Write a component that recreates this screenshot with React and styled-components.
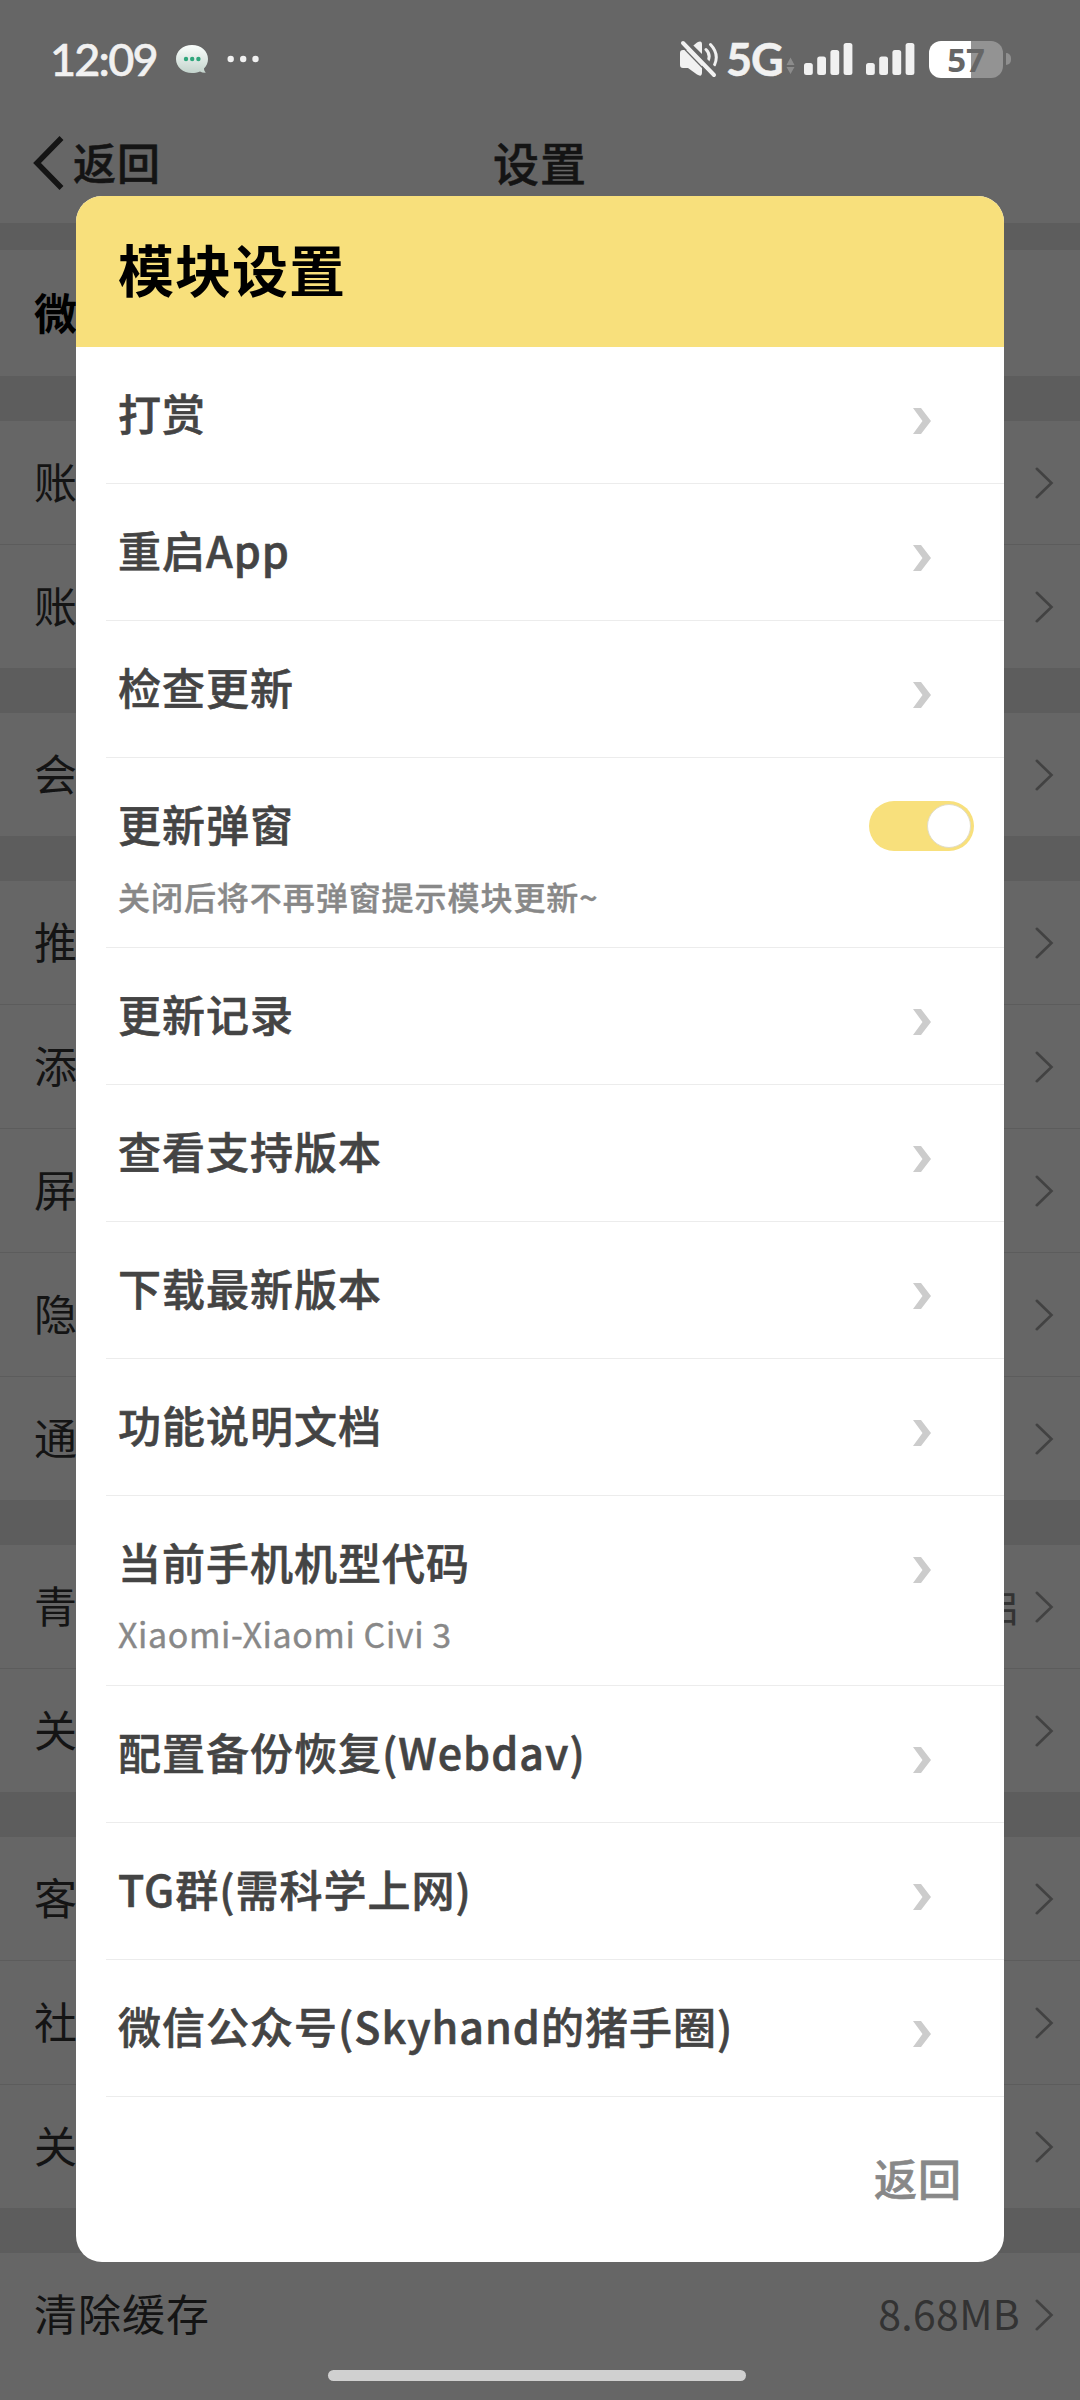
import React, { useState } from "react";
import styled, { createGlobalStyle } from "styled-components";

const GlobalStyle = createGlobalStyle`
	* {
		box-sizing: border-box;
	}

	body {
		margin: 0;
		background-color: #666;
		font-family: "Noto Sans CJK SC", "Noto Sans", sans-serif;
	}
`;

//Styled components
const Screen = styled.div`
	position: relative;
	width: 1080px;
	height: 2400px;
	overflow: hidden;
	background-color: #666;
`;

const StatusBar = styled.header`
	display: flex;
	align-items: center;
	justify-content: space-between;
	height: 100px;
	padding: 0 69px 0 50px;
	color: #f1f1f1;
`;

const StatusSide = styled.div`
	display: flex;
	align-items: center;
	height: 60px;
	margin-top: 18px;
`;

const Clock = styled.span`
	width: 107px;
	font-family: Lato, sans-serif;
	font-size: 45px;
	font-weight: 500;
	letter-spacing: -1.8px;
	line-height: 60px;
	white-space: nowrap;
	-webkit-text-stroke: 0.6px currentColor;
`;

const NavBar = styled.nav`
	display: grid;
	grid-template-columns: 1fr 1fr 1fr;
	align-items: center;
	height: 123px;
	padding: 0 32px 2px;
	color: #141414;
`;

const BackLink = styled.div`
	display: flex;
	align-items: center;
	gap: 8px;
	font-size: 43px;
	font-weight: 500;
	letter-spacing: 1px;
	line-height: 60px;
	-webkit-text-stroke: 0.5px currentColor;
`;

const BackArrow = styled.svg`
	margin-top: 4px;
`;

const NavTitle = styled.h1`
	margin: 0;
	font-size: 46px;
	font-weight: 500;
	letter-spacing: 1px;
	line-height: 60px;
	text-align: center;
	-webkit-text-stroke: 0.5px currentColor;
`;

const Group = styled.section`
	border-top: ${(props) => props.$gap || 45}px solid #5d5d5d;
`;

const PageRow = styled.div`
	display: flex;
	align-items: center;
	height: ${(props) => props.$height || 124}px;
	padding: 0 26px 0 34px;
	border-bottom: 1px solid #5c5c5c;
	color: ${(props) => (props.$strong ? "#000" : "#141414")};
	font-size: 43px;
	font-weight: ${(props) => (props.$strong ? 700 : 400)};
	letter-spacing: 1px;
	line-height: 60px;

	&:last-child {
		height: ${(props) => (props.$height || 124) - 1}px;
		border-bottom: none;
	}
`;

const RowLabel = styled.span`
	padding-bottom: 5px;
`;

const RowValue = styled.span`
	margin-left: auto;
	margin-right: 15px;
	padding-bottom: 5px;
	color: #333;
	font-size: 41px;
	letter-spacing: 0.3px;
`;

const RowArrow = styled.svg`
	margin-left: ${(props) => (props.$push ? "auto" : 0)};
`;

const Dialog = styled.div`
	position: absolute;
	top: 196px;
	left: 76px;
	width: 928px;
	height: 2066px;
	overflow: hidden;
	border-radius: 26px;
	background-color: #fff;
`;

const DialogTitle = styled.h2`
	height: 151px;
	margin: 0;
	padding-left: 42px;
	background-color: #f8e07c;
	color: #000;
	font-size: 56px;
	font-weight: 700;
	letter-spacing: 1px;
	line-height: 144px;
`;

const Item = styled.div`
	display: flex;
	align-items: flex-start;
	justify-content: space-between;
	height: ${(props) => (props.$tall ? 190 : 137)}px;
	margin-left: 30px;
	padding-left: 12px;
	border-bottom: 1px solid #ececec;
`;

const ItemTitle = styled.div`
	padding-top: 35px;
	color: #444;
	font-size: 43px;
	font-weight: 500;
	letter-spacing: 1px;
	line-height: 60px;
	white-space: nowrap;
	-webkit-text-stroke: 0.6px currentColor;
`;

const ItemNote = styled.div`
	padding-top: 23px;
	color: #888;
	font-size: ${(props) => (props.$latin ? 34 : 32)}px;
	font-weight: ${(props) => (props.$latin ? 400 : 500)};
	letter-spacing: ${(props) => (props.$latin ? 0.6 : 0.95)}px;
	line-height: 40px;
	white-space: nowrap;
	-webkit-text-stroke: 0.4px currentColor;
`;

const ItemArrow = styled.svg`
	margin: 61px 73px 0 0;
`;

const Switch = styled.button`
	display: flex;
	justify-content: ${(props) => (props.$on ? "flex-end" : "flex-start")};
	align-items: center;
	width: 105px;
	height: 50px;
	margin: 43px 30px 0 0;
	padding: 3px;
	border: none;
	border-radius: 25px;
	background-color: ${(props) => (props.$on ? "#f8e07c" : "#ddd")};
`;

const Knob = styled.span`
	width: 44px;
	height: 44px;
	border: 1px solid #e0dcc8;
	border-radius: 50%;
	background-color: #fff;
`;

const DialogFooter = styled.footer`
	display: flex;
	justify-content: flex-end;
	padding: 50px 42px 0 0;
	color: #888;
	font-size: 43px;
	font-weight: 500;
	letter-spacing: 1px;
	line-height: 60px;
	-webkit-text-stroke: 0.6px currentColor;
`;

const HomeBar = styled.div`
	position: absolute;
	bottom: 19px;
	left: 328px;
	width: 418px;
	height: 11px;
	border-radius: 6px;
	background-color: #d0d0d0;
`;

const Network = styled.span`
	width: 60px;
	margin-left: 7px;
	font-family: Lato, sans-serif;
	font-size: 45px;
	font-weight: 700;
	letter-spacing: -1px;
	line-height: 60px;
	-webkit-text-stroke: 0.5px currentColor;
`;

const Battery = styled.div`
	display: flex;
	align-items: center;
	justify-content: center;
	width: 74px;
	height: 37px;
	margin-left: 14px;
	border-radius: 12px;
	background: linear-gradient(90deg, #fff 57%, #939393 57%);
	color: #666;
	font-family: "Open Sans", sans-serif;
	font-size: 33px;
	font-weight: 700;
	line-height: 37px;
`;

const BatteryTip = styled.span`
	width: 5px;
	height: 12px;
	margin-left: 3px;
	border-radius: 0 6px 6px 0;
	background-color: #8f8f8f;
`;

const SignalIcon = styled.svg`
	margin-left: ${(props) => props.$space}px;
`;

const BubbleIcon = styled.svg`
	margin-left: 18px;
`;

const pageGroups = [
	{ gap: 27, rows: [{ label: "微", strong: true, height: 127 }] },
	{ rows: [{ label: "账" }, { label: "账" }] },
	{ rows: [{ label: "会" }] },
	{
		rows: [
			{ label: "推" },
			{ label: "添" },
			{ label: "屏" },
			{ label: "隐" },
			{ label: "通" },
		],
	},
	{ rows: [{ label: "青", value: "启" }, { label: "关" }] },
	{ rows: [{ label: "客" }, { label: "社" }, { label: "关" }] },
	{ rows: [{ label: "清除缓存", value: "8.68MB" }] },
];

const items = [
	{ title: "打赏" },
	{ title: "重启App" },
	{ title: "检查更新" },
	{ title: "更新弹窗", note: "关闭后将不再弹窗提示模块更新~", toggle: true },
	{ title: "更新记录" },
	{ title: "查看支持版本" },
	{ title: "下载最新版本" },
	{ title: "功能说明文档" },
	{ title: "当前手机机型代码", note: "Xiaomi-Xiaomi Civi 3", latin: true },
	{ title: "配置备份恢复(Webdav)" },
	{ title: "TG群(需科学上网)" },
	{ title: "微信公众号(Skyhand的猪手圈)" },
];

function Signal({ space }) {
	return (
		<SignalIcon $space={space} width="49" height="34" viewBox="0 0 49 34" fill="#f1f1f1">
			<rect x="0" y="21" width="8.8" height="12" rx="2.5" />
			<rect x="13.2" y="14.5" width="8.8" height="18.5" rx="2.5" />
			<rect x="26.4" y="8" width="8.8" height="25" rx="2.5" />
			<rect x="39.6" y="1" width="8.8" height="32" rx="2.5" />
		</SignalIcon>
	);
}

//JSX
export default function App() {
	const [popup, setPopup] = useState(true);

	return (
		<Screen>
			<GlobalStyle />
			<StatusBar>
				<StatusSide>
					<Clock>12:09</Clock>
					<BubbleIcon width="90" height="34" viewBox="0 0 90 34">
						<defs>
							<linearGradient id="bubble" x1="0" y1="0" x2="0" y2="1">
								<stop offset="0" stopColor="#fbfffd" />
								<stop offset="1" stopColor="#c3d3cc" />
							</linearGradient>
						</defs>
						<path
							d="M17 3C8 3 1 9 1 17s7 14 16 14c3 0 5-.6 8-1.600 2 1.200 4 1.500 6 1.200-1.500-1-2-2.500-2-4 2.500-2.600 4-6 4-9.600C33 9 26 3 17 3z"
							fill="url(#bubble)"
						/>
						<circle cx="11" cy="17" r="2.200" fill="#2fa67c" />
						<circle cx="17.200" cy="17" r="2.200" fill="#2fa67c" />
						<circle cx="23.400" cy="17" r="2.200" fill="#2fa67c" />
						<circle cx="55.700" cy="17" r="3.200" fill="#f1f1f1" />
						<circle cx="68.200" cy="17" r="3.200" fill="#f1f1f1" />
						<circle cx="80.500" cy="17" r="3.200" fill="#f1f1f1" />
					</BubbleIcon>
				</StatusSide>
				<StatusSide>
					<svg width="40" height="38" viewBox="0 0 40 38" fill="none">
						<path
							d="M1 13q0-3 3-3h5l9-7.500q5-3 5 2v28q0 5-5 2L9 28H4q-3 0-3-3z"
							fill="#f1f1f1"
						/>
						<path
							d="M27 9.500q5.500 5.500 1.500 12.500M31.500 4.500q9 9.500 4 20.500"
							stroke="#f1f1f1"
							strokeWidth="3"
							strokeLinecap="round"
						/>
						<path d="M5.500 1 38 33" stroke="#666" strokeWidth="6" />
						<path d="M4 3l31 32" stroke="#f1f1f1" strokeWidth="4" strokeLinecap="round" />
						<path d="M1 4.500l31 32" stroke="#666" strokeWidth="1.200" />
					</svg>
					<Network>5G</Network>
					<svg width="9" height="50" viewBox="0 0 9 50" fill="#8c8c8c">
						<path d="M4.500 23.500 8.500 31H.5zM.5 33h8L4.500 40z" />
					</svg>
					<Signal space={9} />
					<Signal space={13} />
					<Battery>57</Battery>
					<BatteryTip />
				</StatusSide>
			</StatusBar>
			<NavBar>
				<BackLink>
					<BackArrow width="33" height="56" viewBox="0 0 33 56" fill="none">
						<path d="M29.500 3 5 28l24.500 25" stroke="#141414" strokeWidth="5.500" />
					</BackArrow>
					返回
				</BackLink>
				<NavTitle>设置</NavTitle>
			</NavBar>

			{pageGroups.map((group, i) => (
				<Group key={i} $gap={group.gap}>
					{group.rows.map((row, j) => (
						<PageRow key={j} $strong={row.strong} $height={row.height}>
							<RowLabel>{row.label}</RowLabel>
							{row.value && <RowValue>{row.value}</RowValue>}
							{!row.strong && (
								<RowArrow
									$push={!row.value}
									width="19"
									height="32"
									viewBox="0 0 19 32"
									fill="none"
								>
									<path
										d="M1.800 1.800 16.500 16 1.800 30.200"
										stroke="#424242"
										strokeWidth="2.600"
										strokeLinecap="round"
									/>
								</RowArrow>
							)}
						</PageRow>
					))}
				</Group>
			))}

			<Dialog>
				<DialogTitle>模块设置</DialogTitle>
				{items.map((item) => (
					<Item key={item.title} $tall={item.note}>
						<div>
							<ItemTitle>{item.title}</ItemTitle>
							{item.note && <ItemNote $latin={item.latin}>{item.note}</ItemNote>}
						</div>
						{item.toggle ? (
							<Switch $on={popup} onClick={() => setPopup(!popup)}>
								<Knob />
							</Switch>
						) : (
							<ItemArrow width="18" height="26" viewBox="0 0 18 26">
								<path d="M0 0h8l10 13L8 26H0l9.500-13z" fill="#ccc" />
							</ItemArrow>
						)}
					</Item>
				))}
				<DialogFooter>返回</DialogFooter>
			</Dialog>
			<HomeBar />
		</Screen>
	);
}
